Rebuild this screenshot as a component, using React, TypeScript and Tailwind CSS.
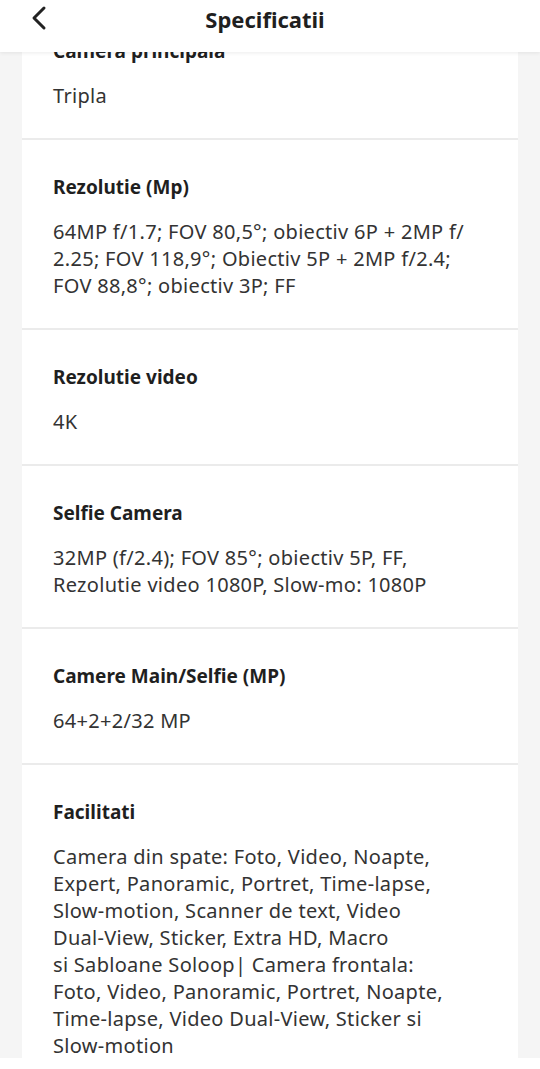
import React from 'react';

type Spec = { label: string; lines: string[] };

const specs: Spec[] = [
  { label: 'Camera principala', lines: ['Tripla'] },
  {
    label: 'Rezolutie (Mp)',
    lines: [
      '64MP f/1.7; FOV 80,5°; obiectiv 6P + 2MP f/',
      '2.25; FOV 118,9°; Obiectiv 5P + 2MP f/2.4;',
      'FOV 88,8°; obiectiv 3P; FF',
    ],
  },
  { label: 'Rezolutie video', lines: ['4K'] },
  {
    label: 'Selfie Camera',
    lines: ['32MP (f/2.4); FOV 85°; obiectiv 5P, FF,', 'Rezolutie video 1080P, Slow-mo: 1080P'],
  },
  { label: 'Camere Main/Selfie (MP)', lines: ['64+2+2/32 MP'] },
  {
    label: 'Facilitati',
    lines: [
      'Camera din spate: Foto, Video, Noapte,',
      'Expert, Panoramic, Portret, Time-lapse,',
      'Slow-motion, Scanner de text, Video',
      'Dual-View, Sticker, Extra HD, Macro',
      'si Sabloane Soloop| Camera frontala:',
      'Foto, Video, Panoramic, Portret, Noapte,',
      'Time-lapse, Video Dual-View, Sticker si',
      'Slow-motion',
    ],
  },
];

function ChevronLeft() {
  return (
    <svg width="20" height="26" viewBox="0 0 20 26" fill="none">
      <polyline
        points="14,3 4,13 14,23"
        stroke="#222"
        strokeWidth="3"
        strokeLinecap="round"
        strokeLinejoin="round"
      />
    </svg>
  );
}

export default function App() {
  return (
    <div
      className="flex h-[1069px] w-[540px] flex-col overflow-hidden bg-[#f5f5f5]"
      style={{ fontFamily: '"Noto Sans", "Open Sans", sans-serif' }}
    >
      {/* Header */}
      <header className="relative z-10 h-[52px] shrink-0 bg-white shadow-[0_1px_4px_rgba(0,0,0,0.08)]">
        <div className="relative flex h-[36px] items-center">
          <button className="ml-[30px] flex h-[26px] w-[20px] items-center justify-center">
            <ChevronLeft />
          </button>
          <h1 className="pointer-events-none absolute inset-0 flex items-center justify-center -ml-[10px] pt-[2px] text-[22px] font-bold text-[#1f1f1f]">
            Specificatii
          </h1>
        </div>
      </header>

      {/* Content */}
      <main className="min-h-0 flex-1 overflow-hidden">
        <div className="mx-[22px] -mt-[48px] bg-white">
          {specs.map((s) => (
            <div key={s.label} className="border-b-2 border-[#ebebeb] px-[31px] pt-[34px] pb-[29px]">
              <div className="text-[19px] font-bold leading-[27px] text-[#1f1f1f]">{s.label}</div>
              <div className="mt-[17px] text-[20px] leading-[27px] tracking-[0.3px] text-[#333]">
                {s.lines.map((l, i) => (
                  <div key={i} className="whitespace-nowrap">
                    {l}
                  </div>
                ))}
              </div>
            </div>
          ))}
        </div>
      </main>

      <div className="h-[11px] shrink-0 bg-white" />
    </div>
  );
}
